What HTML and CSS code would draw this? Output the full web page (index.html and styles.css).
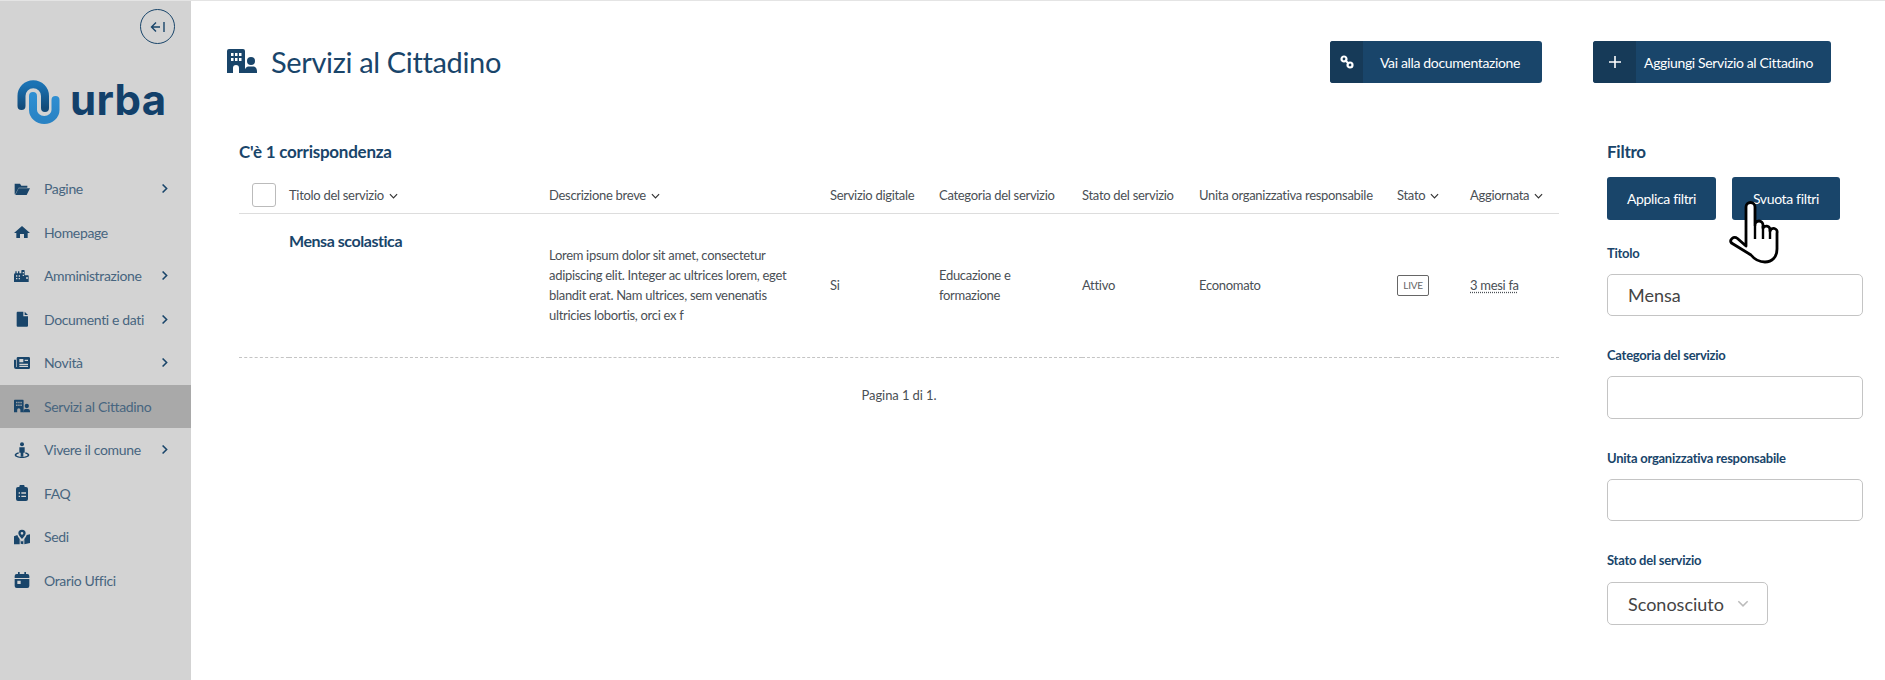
FILE: index.html
```html
<!DOCTYPE html>
<html lang="it">
<head>
    <meta charset="UTF-8">
    <title>Servizi al Cittadino</title>
    <link rel="stylesheet" href="styles.css">
</head>
<body>

<svg class="defs" width="0" height="0">
    <symbol id="chev-right" viewBox="0 0 10 12"><path d="M2 1l5 5-5 5" fill="none" stroke="currentColor" stroke-width="2"/></symbol>
    <symbol id="chev-down" viewBox="0 0 10 6"><path d="M1 1l4 4 4-4" fill="none" stroke="currentColor" stroke-width="1.3"/></symbol>
    <symbol id="building-user" viewBox="0 0 30 24"><path fill-rule="evenodd" d="M2 0h14a2 2 0 0 1 2 2v22h-6v-5a3 3 0 0 0-6 0v5H0V2a2 2 0 0 1 2-2zM4 4v3h2.500V4zM8 4v3h2.500V4zM12 4v3h2.500V4zM4 9v3h2.500V9zM8 9v3h2.500V9zM12 9v3h2.500V9z"/><circle cx="24" cy="12" r="4"/><path d="M17.500 24c-.5-4 2-6.500 4-6.500h5c2 0 4 2.500 3.500 6.500z"/></symbol>
</svg>

<div class="page">
    <aside class="sidebar">
        <button class="collapse">
            <svg width="16" height="12" viewBox="0 0 16 12"><path d="M6 1.500L1.500 6 6 10.500M2 6h8M14 1v10" fill="none" stroke="currentColor" stroke-width="1.400"/></svg>
        </button>
        <div class="logo">
            <svg width="44" height="44" viewBox="0 0 44 44">
                <defs>
                    <linearGradient id="lg-n" x1="0" y1="0" x2="0" y2="1"><stop offset="0" stop-color="#1b73b4"/><stop offset="1" stop-color="#134a78"/></linearGradient>
                    <linearGradient id="lg-u" x1="0" y1="0" x2="0" y2="1"><stop offset="0" stop-color="#2f8fd2"/><stop offset="1" stop-color="#2a83c4"/></linearGradient>
                </defs>
                <path d="M4.500 26V16A11.750 11.750 0 0 1 28 16V28" fill="none" stroke="url(#lg-n)" stroke-width="8" stroke-linecap="round"/>
                <path d="M16 16V30A11.250 10 0 0 0 38.500 30V20" fill="none" stroke="url(#lg-u)" stroke-width="8" stroke-linecap="round"/>
            </svg>
            <span class="logo-text">urba</span>
        </div>
        <nav>
            <a class="nav-item">
                <svg class="nav-icon" viewBox="0 0 24 24"><path d="M1 4h8l2 3h9v3H7L2 20H1zM7 11h17l-5 10H2z"/></svg>
                <span>Pagine</span>
                <svg class="nav-chev"><use href="#chev-right"/></svg>
            </a>
            <a class="nav-item">
                <svg class="nav-icon" viewBox="0 0 24 24"><path d="M12 3l12 10.500h-3.500V21H15v-6H9v6H3.500v-7.500H0z"/></svg>
                <span>Homepage</span>
            </a>
            <a class="nav-item">
                <svg class="nav-icon" viewBox="0 0 24 24"><path fill-rule="evenodd" d="M0 10a2 2 0 0 1 2-2V5h2v3h2V5h2v3h3V4a1 1 0 0 1 1-1h3a1 1 0 0 1 1 1v7h5a1 1 0 0 1 1 1v9H0zM3 11v2h2v-2zM7 11v2h2v-2zM3 15v2h2v-2zM7 15v2h2v-2zM13 6v2h2V6zM13 10v2h2v-2zM18 14v2h3v-2z"/></svg>
                <span>Amministrazione</span>
                <svg class="nav-chev"><use href="#chev-right"/></svg>
            </a>
            <a class="nav-item">
                <svg class="nav-icon" viewBox="0 0 24 24"><path d="M5 1h9v7h7v14a1.500 1.500 0 0 1-1.500 1.500h-14A1.500 1.500 0 0 1 4 22V2.500A1.500 1.500 0 0 1 5 1zM16 1l5 5h-5z"/></svg>
                <span>Documenti e dati</span>
                <svg class="nav-chev"><use href="#chev-right"/></svg>
            </a>
            <a class="nav-item">
                <svg class="nav-icon" viewBox="0 0 24 24"><path fill-rule="evenodd" d="M6 3h16a2 2 0 0 1 2 2v14a2 2 0 0 1-2 2H3a3 3 0 0 1-3-3V7h3v11h1V5a2 2 0 0 1 2-2zM8 6v5h6V6zM16 7v2h5V7zM8 13v2h13v-2zM8 16v2h13v-2z"/></svg>
                <span>Novità</span>
                <svg class="nav-chev"><use href="#chev-right"/></svg>
            </a>
            <a class="nav-item active">
                <svg class="nav-icon" viewBox="0 0 30 24"><use href="#building-user"/></svg>
                <span>Servizi al Cittadino</span>
            </a>
            <a class="nav-item">
                <svg class="nav-icon" viewBox="0 0 24 24"><circle cx="12" cy="3.500" r="3"/><path d="M8 8h8v8h-2v6h-4v-6H8z"/><path d="M7 15.500C3 16.500 1 18 1 19.500 1 22 6 24 12 24s11-2 11-4.500c0-1.500-2-3-6-4v2c2 .5 3.500 1.200 3.500 2 0 1.500-4 2.700-8.500 2.700S3.500 21 3.500 19.500c0-.8 1.500-1.500 3.500-2z"/></svg>
                <span>Vivere il comune</span>
                <svg class="nav-chev"><use href="#chev-right"/></svg>
            </a>
            <a class="nav-item">
                <svg class="nav-icon" viewBox="0 0 24 24"><path fill-rule="evenodd" d="M8 3a4 4 0 0 1 8 0h2a3 3 0 0 1 3 3v15a3 3 0 0 1-3 3H6a3 3 0 0 1-3-3V6a3 3 0 0 1 3-3zM7 11v2h2v-2zM11 11v2h7v-2zM7 16v2h2v-2zM11 16v2h7v-2z"/></svg>
                <span>FAQ</span>
            </a>
            <a class="nav-item">
                <svg class="nav-icon" viewBox="0 0 24 24"><path fill-rule="evenodd" d="M12 1a5.500 5.500 0 0 1 5.500 5.500c0 2.500-3 6-5.500 8.500-2.500-2.500-5.500-6-5.500-8.500A5.500 5.500 0 0 1 12 1zM12 4.500a2 2 0 1 0 0 4 2 2 0 0 0 0-4z"/><path d="M0 11l5-2c.5 2 2 4 3.500 6v8L0 23zM10 17l2 2 2-2v6l-4-1zM15.500 15c1.500-2 3-4 3.500-6l5-1v13l-8.500 2z"/></svg>
                <span>Sedi</span>
            </a>
            <a class="nav-item">
                <svg class="nav-icon" viewBox="0 0 24 24"><path fill-rule="evenodd" d="M6 0h2.500v3h7V0H18v3h2a3 3 0 0 1 3 3v3H1V6a3 3 0 0 1 3-3h2zM1 10.500h22V21a3 3 0 0 1-3 3H4a3 3 0 0 1-3-3zM5 13v5h5v-5z"/></svg>
                <span>Orario Uffici</span>
            </a>
        </nav>
    </aside>

    <main class="main">
        <header class="top">
            <svg class="title-icon" viewBox="0 0 30 24"><use href="#building-user"/></svg>
            <h1>Servizi al Cittadino</h1>
            <div class="top-actions">
                <a class="btn-icon">
                    <span class="btn-ico narrow">
                        <svg width="14" height="14" viewBox="0 0 14 14"><g fill="none" stroke="#fff" stroke-width="2.200"><circle cx="4" cy="4" r="2.500"/><circle cx="10" cy="10" r="2.500"/></g><path d="M5 5l4 4" stroke="#fff" stroke-width="2"/></svg>
                    </span>
                    <span class="btn-label doc">Vai alla documentazione</span>
                </a>
                <a class="btn-icon">
                    <span class="btn-ico wide">
                        <svg width="12" height="12" viewBox="0 0 12 12"><path d="M6 0v12M0 6h12" stroke="#fff" stroke-width="1.600"/></svg>
                    </span>
                    <span class="btn-label add">Aggiungi Servizio al Cittadino</span>
                </a>
            </div>
        </header>

        <div class="content">
            <section class="results">
                <h2>C'è 1 corrispondenza</h2>
                <table class="list">
                    <colgroup>
                        <col class="c-check"><col class="c-title"><col class="c-desc"><col class="c-dig">
                        <col class="c-cat"><col class="c-stato"><col class="c-unita"><col class="c-live"><col class="c-date">
                    </colgroup>
                    <thead>
                        <tr>
                            <th><span class="check"></span></th>
                            <th>Titolo del servizio <svg class="sort"><use href="#chev-down"/></svg></th>
                            <th>Descrizione breve <svg class="sort"><use href="#chev-down"/></svg></th>
                            <th>Servizio digitale</th>
                            <th>Categoria del servizio</th>
                            <th>Stato del servizio</th>
                            <th>Unita organizzativa responsabile</th>
                            <th>Stato <svg class="sort"><use href="#chev-down"/></svg></th>
                            <th>Aggiornata <svg class="sort"><use href="#chev-down"/></svg></th>
                        </tr>
                    </thead>
                    <tbody>
                        <tr>
                            <td></td>
                            <td class="cell-title"><a>Mensa scolastica</a></td>
                            <td>Lorem ipsum dolor sit amet, consectetur<br>adipiscing elit. Integer ac ultrices lorem, eget<br>blandit erat. Nam ultrices, sem venenatis<br>ultricies lobortis, orci ex f</td>
                            <td>Si</td>
                            <td>Educazione e<br>formazione</td>
                            <td>Attivo</td>
                            <td>Economato</td>
                            <td><span class="live">LIVE</span></td>
                            <td><span class="ago">3 mesi fa</span></td>
                        </tr>
                    </tbody>
                </table>
                <p class="paging">Pagina 1 di 1.</p>
            </section>

            <aside class="filter">
                <h2>Filtro</h2>
                <div class="filter-btns">
                    <button class="btn apply">Applica filtri</button>
                    <button class="btn clear">Svuota filtri</button>
                    <svg class="hand" width="50" height="63" viewBox="0 0 50 63"><path d="M17 38V6a4.500 4.500 0 0 1 9 0V24a4 4 0 0 1 8 0v3a3.800 3.800 0 0 1 7 1v2a3.500 3.500 0 0 1 7 2V48c0 8-5 13-12 13-6 0-10-2-14-7L2.500 42c-2.500-3 2-7.500 6-4.500L17 45z" fill="#fff" stroke="#000" stroke-width="2.800" stroke-linejoin="round"/><path d="M26 24V38M34 25V38M41 28V38" stroke="#000" stroke-width="2.400" fill="none"/></svg>
                </div>
                <label class="f-label">Titolo</label>
                <input class="f-input" type="text" value="Mensa">
                <label class="f-label">Categoria del servizio</label>
                <input class="f-input tall" type="text">
                <label class="f-label">Unita organizzativa responsabile</label>
                <input class="f-input" type="text">
                <label class="f-label">Stato del servizio</label>
                <div class="select-wrap">
                    <select class="f-select"><option>Sconosciuto</option></select>
                    <svg class="select-chev"><use href="#chev-down"/></svg>
                </div>
            </aside>
        </div>
    </main>
</div>

</body>
</html>
```

FILE: styles.css
```css
:root { --blue: #19456a; --blue-dark: #163a58; --text: #4a4f55; }
* { box-sizing: border-box; }
html, body { margin: 0; height: 100%; }
body { font-family: "Lato", "Open Sans", sans-serif; background: white; color: var(--text); overflow: hidden; }
.defs { position: absolute; }

.page { display: flex; height: 680px; border-top: 1px solid #e4e4e4; }

/* Menu laterale */
.sidebar { width: 191px; flex-shrink: 0; background: #d3d3d3; display: flex; flex-direction: column; }
.collapse { width: 35px; height: 35px; margin: 8px 16px 0 auto; padding: 0; background: transparent; border: 1px solid var(--blue); border-radius: 50%; color: var(--blue); display: flex; align-items: center; justify-content: center; }
.logo { display: flex; align-items: center; gap: 9px; height: 44px; margin: 36px 0 43px 17px; }
.logo-text { font-family: "Inter", sans-serif; font-weight: 700; font-size: 42px; line-height: 44px; letter-spacing: 0.3px; color: #12406a; margin-top: -5px; }
.nav-item { display: flex; align-items: center; height: 43.500px; padding-left: 14px; color: #47657f; font-size: 14px; letter-spacing: -0.35px; }
.nav-item.active { background: #a9a9a9; }
.nav-icon { width: 16px; height: 16px; fill: var(--blue); margin-right: 14px; flex-shrink: 0; }
.nav-chev { width: 8px; height: 11px; color: var(--blue); margin-left: auto; margin-right: 22px; }

/* Contenuto */
.main { flex: 1; padding: 40px 54px 0 36px; min-width: 0; }
.top { display: flex; align-items: center; height: 42px; }
.title-icon { width: 30px; height: 24px; fill: var(--blue); margin-right: 14px; margin-top: -2px; }
h1 { margin: 0 0 2px; font-size: 29px; font-weight: 400; color: var(--blue); letter-spacing: -0.35px; }
.top-actions { margin-left: auto; display: flex; gap: 51px; }
.btn-icon { display: flex; height: 42px; background: var(--blue); color: white; border-radius: 3px; overflow: hidden; font-size: 14px; letter-spacing: -0.35px; }
.btn-ico { display: flex; align-items: center; justify-content: center; background: var(--blue-dark); }
.btn-ico.narrow { width: 33px; }
.btn-ico.wide { width: 43px; }
.btn-label { display: flex; align-items: center; white-space: nowrap; }
.btn-label.doc { width: 179px; padding-left: 17px; }
.btn-label.add { width: 195px; padding-left: 8px; }

.content { display: grid; grid-template-columns: 1320px 256px; column-gap: 48px; margin: 57px 0 0 12px; }
h2 { margin: 0; height: 24px; line-height: 24px; font-size: 17px; font-weight: 700; color: var(--blue); letter-spacing: -0.25px; }

/* Tabella */
.list { table-layout: fixed; width: 1320px; border-collapse: collapse; margin-top: 13px; font-size: 13px; letter-spacing: -0.3px; }
.c-check { width: 50px; }
.c-title { width: 260px; }
.c-desc { width: 281px; }
.c-dig { width: 109px; }
.c-cat { width: 143px; }
.c-stato { width: 117px; }
.c-unita { width: 198px; }
.c-live { width: 73px; }
.c-date { width: 89px; }
.list th { height: 36px; padding: 0; text-align: left; font-weight: 400; white-space: nowrap; border-bottom: 1px solid #ddd; }
.list td { height: 144px; padding: 0; line-height: 20px; vertical-align: middle; border-bottom: 1px dashed #c4c4c4; white-space: nowrap; }
.check { display: block; width: 24px; height: 24px; margin-left: 13px; border: 1px solid #bbb; border-radius: 3px; }
.sort { width: 9px; height: 6px; margin-left: 2px; color: #333; vertical-align: 1px; }
.list td.cell-title { vertical-align: top; padding-top: 17px; font-size: 16px; font-weight: 700; color: var(--blue); letter-spacing: -0.45px; }
.live { display: inline-block; width: 32px; height: 21px; line-height: 19px; border: 1px solid #666; border-radius: 2px; text-align: center; font-size: 10px; color: #666; }
.ago { text-decoration: underline dotted; text-underline-offset: 2px; }
.paging { margin: 27px 0 0; line-height: 20px; font-size: 13px; letter-spacing: -0.1px; text-align: center; }

/* Filtri */
.filter-btns { position: relative; display: flex; gap: 16px; margin: 13px 0 23px; }
.btn { height: 43px; border: none; border-radius: 3px; background: var(--blue); color: white; font-family: inherit; font-size: 14px; letter-spacing: -0.35px; padding: 0; }
.btn.apply { width: 109px; }
.btn.clear { width: 108px; }
.hand { position: absolute; left: 122px; top: 24px; }
.f-label { display: block; height: 20px; line-height: 20px; font-size: 13px; font-weight: 700; color: var(--blue); letter-spacing: -0.25px; margin-bottom: 11px; }
.f-input { display: block; width: 256px; height: 42px; margin-bottom: 29px; padding: 0 20px; border: 1px solid #c4c4c4; border-radius: 5px; font-family: inherit; font-size: 18px; color: #444; outline: none; }
.f-input.tall { height: 43px; }
.select-wrap { position: relative; width: 161px; margin-top: 12px; }
.f-select { appearance: none; width: 100%; height: 43px; padding: 0 20px; background: white; border: 1px solid #c4c4c4; border-radius: 5px; font-family: inherit; font-size: 18px; color: #444; }
.select-chev { position: absolute; right: 19px; top: 18px; width: 12px; height: 7px; color: #bbb; }
```
